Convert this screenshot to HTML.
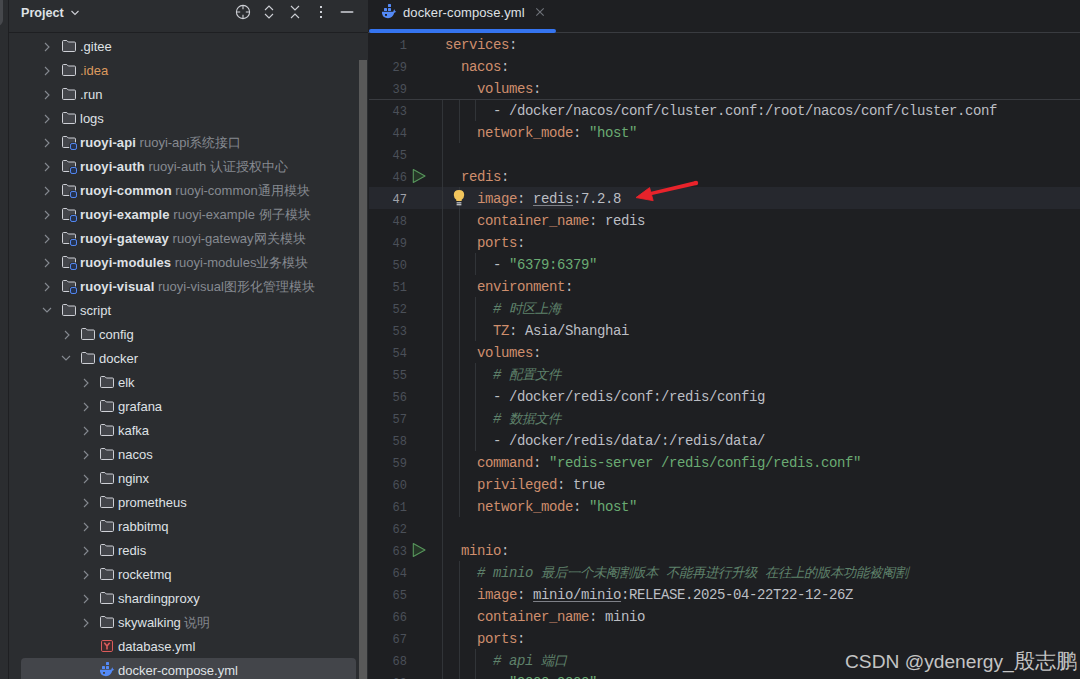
<!DOCTYPE html>
<html><head><meta charset="utf-8">
<style>
*{margin:0;padding:0;box-sizing:border-box}
html,body{width:1080px;height:679px;overflow:hidden;background:#1E1F22}
body{position:relative;font-family:"Liberation Sans",sans-serif;font-size:13px;color:#DFE1E5}
.abs{position:absolute}
#strip{left:0;top:0;width:8px;height:679px;background:#2B2D30;overflow:hidden}
#strip .btn{position:absolute;left:-10px;top:-5px;width:13px;height:31px;border-radius:6px;background:#46484C}
#vb1{left:8px;top:0;width:1px;height:679px;background:#1E1F22}
#proj{left:9px;top:0;width:359px;height:679px;background:#2B2D30}
#projhdr{left:9px;top:32px;width:359px;height:1px;background:#1E1F22}
.ptitle{left:21px;top:5px;font-weight:bold;font-size:12.6px;line-height:17px;color:#DFE1E5}
.trow{height:24px;line-height:24px;white-space:nowrap;color:#DFE1E5}
.gray{color:#868A91}
.b{font-weight:bold;letter-spacing:0.12px}
#editor{left:368px;top:0;width:712px;height:679px;background:#1E1F22}
#tabline{left:368px;top:32px;width:712px;height:1px;background:#393B40}
#tabul{left:369px;top:29px;width:187px;height:4px;border-radius:2px;background:#3574F0}
.code{position:absolute;left:445px;height:22px;line-height:22px;font-family:"Liberation Mono",monospace;font-size:14px;letter-spacing:-0.4px;white-space:pre;color:#BCBEC4}
.ln{position:absolute;left:371px;width:36px;text-align:right;transform:scaleX(0.9);transform-origin:35px 0;height:22px;line-height:22px;font-family:"Liberation Mono",monospace;font-size:13.333px;color:#4B5059}
.ln.cur{color:#A1A3AB}
.k{color:#CF8E6D}
.s{color:#6AAB73}
.c{color:#5F826B;font-style:italic}
.u{text-decoration:underline;text-underline-offset:2px;text-decoration-color:#7E8087}
.cj{font-size:13.333px;letter-spacing:0}
.ig{position:absolute;width:1px;background:#313438}
#sbar{left:359px;top:60px;width:8px;height:630px;background:#595959}
#vb2{left:368px;top:0;width:1px;height:679px;background:#1E1F22}
#sel{left:21px;top:658px;width:335px;height:30px;border-radius:4px;background:#43454A}
#caret{left:369px;top:187px;width:711px;height:22px;background:#26282E}
#stickyb{left:369px;top:99px;width:711px;height:1px;background:#393B40}
#wm{left:845px;top:648px;font-size:19.2px;color:#C4C4C4;line-height:26px;white-space:nowrap}
#wm .cj{font-size:20.5px}

</style></head><body>
<div class="abs" id="strip"><div class="btn"></div></div>
<div class="abs" id="proj"></div>
<div class="abs" id="vb1"></div>
<div class="abs" id="projhdr"></div>
<div class="abs ptitle">Project</div>
<svg class="abs" style="left:70px;top:9px" width="10" height="8" viewBox="0 0 10 8"><path d="M1.5 2 L5 5.5 L8.5 2" fill="none" stroke="#CED0D6" stroke-width="1.1"/></svg>
<svg class="abs" style="left:235px;top:4px" width="16" height="16" viewBox="0 0 16 16"><circle cx="8" cy="8" r="6.6" fill="none" stroke="#CED0D6" stroke-width="1.1"/><path d="M8 1.5 V5.2 M8 10.8 V14.5 M1.5 8 H5.2 M10.8 8 H14.5" stroke="#CED0D6" stroke-width="1.1"/></svg>
<svg class="abs" style="left:261px;top:4px" width="16" height="16" viewBox="0 0 16 16"><path d="M4 6 L8 2 L12 6 M4 10 L8 14 L12 10" fill="none" stroke="#CED0D6" stroke-width="1.1"/></svg>
<svg class="abs" style="left:287px;top:4px" width="16" height="16" viewBox="0 0 16 16"><path d="M4 2 L8 6 L12 2 M4 14 L8 10 L12 14" fill="none" stroke="#CED0D6" stroke-width="1.1"/></svg>
<svg class="abs" style="left:313px;top:4px" width="16" height="16" viewBox="0 0 16 16"><rect x="7" y="2" width="2" height="2" fill="#CED0D6"/><rect x="7" y="7" width="2" height="2" fill="#CED0D6"/><rect x="7" y="12" width="2" height="2" fill="#CED0D6"/></svg>
<svg class="abs" style="left:339px;top:4px" width="16" height="16" viewBox="0 0 16 16"><rect x="1.5" y="7" width="13" height="2" rx="1" fill="#A8AAB0"/></svg>
<div class="abs" id="sel"></div>
<div class="abs" id="sbar"></div>
<svg class="abs" style="left:43.2px;top:41.5px" width="8" height="10" viewBox="0 0 8 10"><path d="M2 1 L6 5 L2 9" fill="none" stroke="#868A91" stroke-width="1.1"/></svg>
<svg class="abs" style="left:61px;top:38px" width="16" height="16" viewBox="0 0 16 16"><path d="M1.5 3.6 Q1.5 2.5 2.6 2.5 H5.8 L7.3 4 H13.4 Q14.5 4 14.5 5.1 V12.4 Q14.5 13.5 13.4 13.5 H2.6 Q1.5 13.5 1.5 12.4 Z" fill="#43454A" stroke="#CED0D6" stroke-width="1"/></svg>
<div class="abs trow" style="left:80px;top:35px;"><span class="">.gitee</span></div>
<svg class="abs" style="left:43.2px;top:65.5px" width="8" height="10" viewBox="0 0 8 10"><path d="M2 1 L6 5 L2 9" fill="none" stroke="#868A91" stroke-width="1.1"/></svg>
<svg class="abs" style="left:61px;top:62px" width="16" height="16" viewBox="0 0 16 16"><path d="M1.5 3.6 Q1.5 2.5 2.6 2.5 H5.8 L7.3 4 H13.4 Q14.5 4 14.5 5.1 V12.4 Q14.5 13.5 13.4 13.5 H2.6 Q1.5 13.5 1.5 12.4 Z" fill="#43454A" stroke="#CED0D6" stroke-width="1"/></svg>
<div class="abs trow" style="left:80px;top:59px;color:#DC9A5E"><span class="">.idea</span></div>
<svg class="abs" style="left:43.2px;top:89.5px" width="8" height="10" viewBox="0 0 8 10"><path d="M2 1 L6 5 L2 9" fill="none" stroke="#868A91" stroke-width="1.1"/></svg>
<svg class="abs" style="left:61px;top:86px" width="16" height="16" viewBox="0 0 16 16"><path d="M1.5 3.6 Q1.5 2.5 2.6 2.5 H5.8 L7.3 4 H13.4 Q14.5 4 14.5 5.1 V12.4 Q14.5 13.5 13.4 13.5 H2.6 Q1.5 13.5 1.5 12.4 Z" fill="#43454A" stroke="#CED0D6" stroke-width="1"/></svg>
<div class="abs trow" style="left:80px;top:83px;"><span class="">.run</span></div>
<svg class="abs" style="left:43.2px;top:113.5px" width="8" height="10" viewBox="0 0 8 10"><path d="M2 1 L6 5 L2 9" fill="none" stroke="#868A91" stroke-width="1.1"/></svg>
<svg class="abs" style="left:61px;top:110px" width="16" height="16" viewBox="0 0 16 16"><path d="M1.5 3.6 Q1.5 2.5 2.6 2.5 H5.8 L7.3 4 H13.4 Q14.5 4 14.5 5.1 V12.4 Q14.5 13.5 13.4 13.5 H2.6 Q1.5 13.5 1.5 12.4 Z" fill="#43454A" stroke="#CED0D6" stroke-width="1"/></svg>
<div class="abs trow" style="left:80px;top:107px;"><span class="">logs</span></div>
<svg class="abs" style="left:43.2px;top:137.5px" width="8" height="10" viewBox="0 0 8 10"><path d="M2 1 L6 5 L2 9" fill="none" stroke="#868A91" stroke-width="1.1"/></svg>
<svg class="abs" style="left:61px;top:134px" width="16" height="16" viewBox="0 0 16 16"><path d="M1.5 3.6 Q1.5 2.5 2.6 2.5 H5.8 L7.3 4 H13.4 Q14.5 4 14.5 5.1 V12.4 Q14.5 13.5 13.4 13.5 H2.6 Q1.5 13.5 1.5 12.4 Z" fill="#43454A" stroke="#CED0D6" stroke-width="1"/><rect x="9.5" y="9.5" width="6" height="6" rx="1.6" fill="#2B2D30" stroke="#2B2D30" stroke-width="2.6"/><rect x="9.5" y="9.5" width="6" height="6" rx="1.6" fill="#25324D" stroke="#548AF7" stroke-width="1"/></svg>
<div class="abs trow" style="left:80px;top:131px;"><span class="b">ruoyi-api</span> <span class="gray">ruoyi-api系统接口</span></div>
<svg class="abs" style="left:43.2px;top:161.5px" width="8" height="10" viewBox="0 0 8 10"><path d="M2 1 L6 5 L2 9" fill="none" stroke="#868A91" stroke-width="1.1"/></svg>
<svg class="abs" style="left:61px;top:158px" width="16" height="16" viewBox="0 0 16 16"><path d="M1.5 3.6 Q1.5 2.5 2.6 2.5 H5.8 L7.3 4 H13.4 Q14.5 4 14.5 5.1 V12.4 Q14.5 13.5 13.4 13.5 H2.6 Q1.5 13.5 1.5 12.4 Z" fill="#43454A" stroke="#CED0D6" stroke-width="1"/><rect x="9.5" y="9.5" width="6" height="6" rx="1.6" fill="#2B2D30" stroke="#2B2D30" stroke-width="2.6"/><rect x="9.5" y="9.5" width="6" height="6" rx="1.6" fill="#25324D" stroke="#548AF7" stroke-width="1"/></svg>
<div class="abs trow" style="left:80px;top:155px;"><span class="b">ruoyi-auth</span> <span class="gray">ruoyi-auth 认证授权中心</span></div>
<svg class="abs" style="left:43.2px;top:185.5px" width="8" height="10" viewBox="0 0 8 10"><path d="M2 1 L6 5 L2 9" fill="none" stroke="#868A91" stroke-width="1.1"/></svg>
<svg class="abs" style="left:61px;top:182px" width="16" height="16" viewBox="0 0 16 16"><path d="M1.5 3.6 Q1.5 2.5 2.6 2.5 H5.8 L7.3 4 H13.4 Q14.5 4 14.5 5.1 V12.4 Q14.5 13.5 13.4 13.5 H2.6 Q1.5 13.5 1.5 12.4 Z" fill="#43454A" stroke="#CED0D6" stroke-width="1"/><rect x="9.5" y="9.5" width="6" height="6" rx="1.6" fill="#2B2D30" stroke="#2B2D30" stroke-width="2.6"/><rect x="9.5" y="9.5" width="6" height="6" rx="1.6" fill="#25324D" stroke="#548AF7" stroke-width="1"/></svg>
<div class="abs trow" style="left:80px;top:179px;"><span class="b">ruoyi-common</span> <span class="gray">ruoyi-common通用模块</span></div>
<svg class="abs" style="left:43.2px;top:209.5px" width="8" height="10" viewBox="0 0 8 10"><path d="M2 1 L6 5 L2 9" fill="none" stroke="#868A91" stroke-width="1.1"/></svg>
<svg class="abs" style="left:61px;top:206px" width="16" height="16" viewBox="0 0 16 16"><path d="M1.5 3.6 Q1.5 2.5 2.6 2.5 H5.8 L7.3 4 H13.4 Q14.5 4 14.5 5.1 V12.4 Q14.5 13.5 13.4 13.5 H2.6 Q1.5 13.5 1.5 12.4 Z" fill="#43454A" stroke="#CED0D6" stroke-width="1"/><rect x="9.5" y="9.5" width="6" height="6" rx="1.6" fill="#2B2D30" stroke="#2B2D30" stroke-width="2.6"/><rect x="9.5" y="9.5" width="6" height="6" rx="1.6" fill="#25324D" stroke="#548AF7" stroke-width="1"/></svg>
<div class="abs trow" style="left:80px;top:203px;"><span class="b">ruoyi-example</span> <span class="gray">ruoyi-example 例子模块</span></div>
<svg class="abs" style="left:43.2px;top:233.5px" width="8" height="10" viewBox="0 0 8 10"><path d="M2 1 L6 5 L2 9" fill="none" stroke="#868A91" stroke-width="1.1"/></svg>
<svg class="abs" style="left:61px;top:230px" width="16" height="16" viewBox="0 0 16 16"><path d="M1.5 3.6 Q1.5 2.5 2.6 2.5 H5.8 L7.3 4 H13.4 Q14.5 4 14.5 5.1 V12.4 Q14.5 13.5 13.4 13.5 H2.6 Q1.5 13.5 1.5 12.4 Z" fill="#43454A" stroke="#CED0D6" stroke-width="1"/><rect x="9.5" y="9.5" width="6" height="6" rx="1.6" fill="#2B2D30" stroke="#2B2D30" stroke-width="2.6"/><rect x="9.5" y="9.5" width="6" height="6" rx="1.6" fill="#25324D" stroke="#548AF7" stroke-width="1"/></svg>
<div class="abs trow" style="left:80px;top:227px;"><span class="b">ruoyi-gateway</span> <span class="gray">ruoyi-gateway网关模块</span></div>
<svg class="abs" style="left:43.2px;top:257.5px" width="8" height="10" viewBox="0 0 8 10"><path d="M2 1 L6 5 L2 9" fill="none" stroke="#868A91" stroke-width="1.1"/></svg>
<svg class="abs" style="left:61px;top:254px" width="16" height="16" viewBox="0 0 16 16"><path d="M1.5 3.6 Q1.5 2.5 2.6 2.5 H5.8 L7.3 4 H13.4 Q14.5 4 14.5 5.1 V12.4 Q14.5 13.5 13.4 13.5 H2.6 Q1.5 13.5 1.5 12.4 Z" fill="#43454A" stroke="#CED0D6" stroke-width="1"/><rect x="9.5" y="9.5" width="6" height="6" rx="1.6" fill="#2B2D30" stroke="#2B2D30" stroke-width="2.6"/><rect x="9.5" y="9.5" width="6" height="6" rx="1.6" fill="#25324D" stroke="#548AF7" stroke-width="1"/></svg>
<div class="abs trow" style="left:80px;top:251px;"><span class="b">ruoyi-modules</span> <span class="gray">ruoyi-modules业务模块</span></div>
<svg class="abs" style="left:43.2px;top:281.5px" width="8" height="10" viewBox="0 0 8 10"><path d="M2 1 L6 5 L2 9" fill="none" stroke="#868A91" stroke-width="1.1"/></svg>
<svg class="abs" style="left:61px;top:278px" width="16" height="16" viewBox="0 0 16 16"><path d="M1.5 3.6 Q1.5 2.5 2.6 2.5 H5.8 L7.3 4 H13.4 Q14.5 4 14.5 5.1 V12.4 Q14.5 13.5 13.4 13.5 H2.6 Q1.5 13.5 1.5 12.4 Z" fill="#43454A" stroke="#CED0D6" stroke-width="1"/><rect x="9.5" y="9.5" width="6" height="6" rx="1.6" fill="#2B2D30" stroke="#2B2D30" stroke-width="2.6"/><rect x="9.5" y="9.5" width="6" height="6" rx="1.6" fill="#25324D" stroke="#548AF7" stroke-width="1"/></svg>
<div class="abs trow" style="left:80px;top:275px;"><span class="b">ruoyi-visual</span> <span class="gray">ruoyi-visual图形化管理模块</span></div>
<svg class="abs" style="left:42px;top:306px" width="10" height="8" viewBox="0 0 10 8"><path d="M1 2 L5 6 L9 2" fill="none" stroke="#868A91" stroke-width="1.1"/></svg>
<svg class="abs" style="left:61px;top:302px" width="16" height="16" viewBox="0 0 16 16"><path d="M1.5 3.6 Q1.5 2.5 2.6 2.5 H5.8 L7.3 4 H13.4 Q14.5 4 14.5 5.1 V12.4 Q14.5 13.5 13.4 13.5 H2.6 Q1.5 13.5 1.5 12.4 Z" fill="#43454A" stroke="#CED0D6" stroke-width="1"/></svg>
<div class="abs trow" style="left:80px;top:299px;"><span class="">script</span></div>
<svg class="abs" style="left:62.6px;top:329.5px" width="8" height="10" viewBox="0 0 8 10"><path d="M2 1 L6 5 L2 9" fill="none" stroke="#868A91" stroke-width="1.1"/></svg>
<svg class="abs" style="left:80px;top:326px" width="16" height="16" viewBox="0 0 16 16"><path d="M1.5 3.6 Q1.5 2.5 2.6 2.5 H5.8 L7.3 4 H13.4 Q14.5 4 14.5 5.1 V12.4 Q14.5 13.5 13.4 13.5 H2.6 Q1.5 13.5 1.5 12.4 Z" fill="#43454A" stroke="#CED0D6" stroke-width="1"/></svg>
<div class="abs trow" style="left:99px;top:323px;"><span class="">config</span></div>
<svg class="abs" style="left:61px;top:354px" width="10" height="8" viewBox="0 0 10 8"><path d="M1 2 L5 6 L9 2" fill="none" stroke="#868A91" stroke-width="1.1"/></svg>
<svg class="abs" style="left:80px;top:350px" width="16" height="16" viewBox="0 0 16 16"><path d="M1.5 3.6 Q1.5 2.5 2.6 2.5 H5.8 L7.3 4 H13.4 Q14.5 4 14.5 5.1 V12.4 Q14.5 13.5 13.4 13.5 H2.6 Q1.5 13.5 1.5 12.4 Z" fill="#43454A" stroke="#CED0D6" stroke-width="1"/></svg>
<div class="abs trow" style="left:99px;top:347px;"><span class="">docker</span></div>
<svg class="abs" style="left:82.0px;top:377.5px" width="8" height="10" viewBox="0 0 8 10"><path d="M2 1 L6 5 L2 9" fill="none" stroke="#868A91" stroke-width="1.1"/></svg>
<svg class="abs" style="left:99px;top:374px" width="16" height="16" viewBox="0 0 16 16"><path d="M1.5 3.6 Q1.5 2.5 2.6 2.5 H5.8 L7.3 4 H13.4 Q14.5 4 14.5 5.1 V12.4 Q14.5 13.5 13.4 13.5 H2.6 Q1.5 13.5 1.5 12.4 Z" fill="#43454A" stroke="#CED0D6" stroke-width="1"/></svg>
<div class="abs trow" style="left:118px;top:371px;"><span class="">elk</span></div>
<svg class="abs" style="left:82.0px;top:401.5px" width="8" height="10" viewBox="0 0 8 10"><path d="M2 1 L6 5 L2 9" fill="none" stroke="#868A91" stroke-width="1.1"/></svg>
<svg class="abs" style="left:99px;top:398px" width="16" height="16" viewBox="0 0 16 16"><path d="M1.5 3.6 Q1.5 2.5 2.6 2.5 H5.8 L7.3 4 H13.4 Q14.5 4 14.5 5.1 V12.4 Q14.5 13.5 13.4 13.5 H2.6 Q1.5 13.5 1.5 12.4 Z" fill="#43454A" stroke="#CED0D6" stroke-width="1"/></svg>
<div class="abs trow" style="left:118px;top:395px;"><span class="">grafana</span></div>
<svg class="abs" style="left:82.0px;top:425.5px" width="8" height="10" viewBox="0 0 8 10"><path d="M2 1 L6 5 L2 9" fill="none" stroke="#868A91" stroke-width="1.1"/></svg>
<svg class="abs" style="left:99px;top:422px" width="16" height="16" viewBox="0 0 16 16"><path d="M1.5 3.6 Q1.5 2.5 2.6 2.5 H5.8 L7.3 4 H13.4 Q14.5 4 14.5 5.1 V12.4 Q14.5 13.5 13.4 13.5 H2.6 Q1.5 13.5 1.5 12.4 Z" fill="#43454A" stroke="#CED0D6" stroke-width="1"/></svg>
<div class="abs trow" style="left:118px;top:419px;"><span class="">kafka</span></div>
<svg class="abs" style="left:82.0px;top:449.5px" width="8" height="10" viewBox="0 0 8 10"><path d="M2 1 L6 5 L2 9" fill="none" stroke="#868A91" stroke-width="1.1"/></svg>
<svg class="abs" style="left:99px;top:446px" width="16" height="16" viewBox="0 0 16 16"><path d="M1.5 3.6 Q1.5 2.5 2.6 2.5 H5.8 L7.3 4 H13.4 Q14.5 4 14.5 5.1 V12.4 Q14.5 13.5 13.4 13.5 H2.6 Q1.5 13.5 1.5 12.4 Z" fill="#43454A" stroke="#CED0D6" stroke-width="1"/></svg>
<div class="abs trow" style="left:118px;top:443px;"><span class="">nacos</span></div>
<svg class="abs" style="left:82.0px;top:473.5px" width="8" height="10" viewBox="0 0 8 10"><path d="M2 1 L6 5 L2 9" fill="none" stroke="#868A91" stroke-width="1.1"/></svg>
<svg class="abs" style="left:99px;top:470px" width="16" height="16" viewBox="0 0 16 16"><path d="M1.5 3.6 Q1.5 2.5 2.6 2.5 H5.8 L7.3 4 H13.4 Q14.5 4 14.5 5.1 V12.4 Q14.5 13.5 13.4 13.5 H2.6 Q1.5 13.5 1.5 12.4 Z" fill="#43454A" stroke="#CED0D6" stroke-width="1"/></svg>
<div class="abs trow" style="left:118px;top:467px;"><span class="">nginx</span></div>
<svg class="abs" style="left:82.0px;top:497.5px" width="8" height="10" viewBox="0 0 8 10"><path d="M2 1 L6 5 L2 9" fill="none" stroke="#868A91" stroke-width="1.1"/></svg>
<svg class="abs" style="left:99px;top:494px" width="16" height="16" viewBox="0 0 16 16"><path d="M1.5 3.6 Q1.5 2.5 2.6 2.5 H5.8 L7.3 4 H13.4 Q14.5 4 14.5 5.1 V12.4 Q14.5 13.5 13.4 13.5 H2.6 Q1.5 13.5 1.5 12.4 Z" fill="#43454A" stroke="#CED0D6" stroke-width="1"/></svg>
<div class="abs trow" style="left:118px;top:491px;"><span class="">prometheus</span></div>
<svg class="abs" style="left:82.0px;top:521.5px" width="8" height="10" viewBox="0 0 8 10"><path d="M2 1 L6 5 L2 9" fill="none" stroke="#868A91" stroke-width="1.1"/></svg>
<svg class="abs" style="left:99px;top:518px" width="16" height="16" viewBox="0 0 16 16"><path d="M1.5 3.6 Q1.5 2.5 2.6 2.5 H5.8 L7.3 4 H13.4 Q14.5 4 14.5 5.1 V12.4 Q14.5 13.5 13.4 13.5 H2.6 Q1.5 13.5 1.5 12.4 Z" fill="#43454A" stroke="#CED0D6" stroke-width="1"/></svg>
<div class="abs trow" style="left:118px;top:515px;"><span class="">rabbitmq</span></div>
<svg class="abs" style="left:82.0px;top:545.5px" width="8" height="10" viewBox="0 0 8 10"><path d="M2 1 L6 5 L2 9" fill="none" stroke="#868A91" stroke-width="1.1"/></svg>
<svg class="abs" style="left:99px;top:542px" width="16" height="16" viewBox="0 0 16 16"><path d="M1.5 3.6 Q1.5 2.5 2.6 2.5 H5.8 L7.3 4 H13.4 Q14.5 4 14.5 5.1 V12.4 Q14.5 13.5 13.4 13.5 H2.6 Q1.5 13.5 1.5 12.4 Z" fill="#43454A" stroke="#CED0D6" stroke-width="1"/></svg>
<div class="abs trow" style="left:118px;top:539px;"><span class="">redis</span></div>
<svg class="abs" style="left:82.0px;top:569.5px" width="8" height="10" viewBox="0 0 8 10"><path d="M2 1 L6 5 L2 9" fill="none" stroke="#868A91" stroke-width="1.1"/></svg>
<svg class="abs" style="left:99px;top:566px" width="16" height="16" viewBox="0 0 16 16"><path d="M1.5 3.6 Q1.5 2.5 2.6 2.5 H5.8 L7.3 4 H13.4 Q14.5 4 14.5 5.1 V12.4 Q14.5 13.5 13.4 13.5 H2.6 Q1.5 13.5 1.5 12.4 Z" fill="#43454A" stroke="#CED0D6" stroke-width="1"/></svg>
<div class="abs trow" style="left:118px;top:563px;"><span class="">rocketmq</span></div>
<svg class="abs" style="left:82.0px;top:593.5px" width="8" height="10" viewBox="0 0 8 10"><path d="M2 1 L6 5 L2 9" fill="none" stroke="#868A91" stroke-width="1.1"/></svg>
<svg class="abs" style="left:99px;top:590px" width="16" height="16" viewBox="0 0 16 16"><path d="M1.5 3.6 Q1.5 2.5 2.6 2.5 H5.8 L7.3 4 H13.4 Q14.5 4 14.5 5.1 V12.4 Q14.5 13.5 13.4 13.5 H2.6 Q1.5 13.5 1.5 12.4 Z" fill="#43454A" stroke="#CED0D6" stroke-width="1"/></svg>
<div class="abs trow" style="left:118px;top:587px;"><span class="">shardingproxy</span></div>
<svg class="abs" style="left:82.0px;top:617.5px" width="8" height="10" viewBox="0 0 8 10"><path d="M2 1 L6 5 L2 9" fill="none" stroke="#868A91" stroke-width="1.1"/></svg>
<svg class="abs" style="left:99px;top:614px" width="16" height="16" viewBox="0 0 16 16"><path d="M1.5 3.6 Q1.5 2.5 2.6 2.5 H5.8 L7.3 4 H13.4 Q14.5 4 14.5 5.1 V12.4 Q14.5 13.5 13.4 13.5 H2.6 Q1.5 13.5 1.5 12.4 Z" fill="#43454A" stroke="#CED0D6" stroke-width="1"/></svg>
<div class="abs trow" style="left:118px;top:611px;"><span class="">skywalking</span> <span class="gray">说明</span></div>
<svg class="abs" style="left:99px;top:638px" width="16" height="16" viewBox="0 0 16 16"><rect x="2.5" y="2.5" width="11" height="11" rx="1.3" fill="#3D2A2C" stroke="#DB5C5C" stroke-width="1"/><path d="M5.3 4.8 L8 8 L10.7 4.8 M8 7.8 V11.4" fill="none" stroke="#DB5C5C" stroke-width="1.6"/></svg>
<div class="abs trow" style="left:118px;top:635px;"><span class="">database.yml</span></div>
<svg class="abs" style="left:99px;top:661px" width="16" height="16" viewBox="0 0 16 16"><g fill="#548AF7"><rect x="7" y="1" width="3" height="3" rx="0.6"/><rect x="3" y="5" width="3" height="3" rx="0.6"/><rect x="7" y="5" width="3" height="3" rx="0.6"/><path d="M1 8.8 H12.2 Q12.6 7.2 13.2 6.2 Q14 7.2 14 8.2 Q14.8 8.1 15.3 8.6 Q14.6 9.6 13.3 9.7 Q11.8 15 7 15.2 Q2 15.2 1 10.6 Z"/></g><rect x="4" y="11" width="2" height="1.8" fill="#43454A"/></svg>
<div class="abs trow" style="left:118px;top:659px;"><span class="">docker-compose.yml</span></div>
<div class="abs" id="editor"></div>
<div class="abs" id="vb2"></div>
<div class="abs" id="tabline"></div>
<div class="abs" id="tabul"></div>
<div class="abs" style="left:403px;top:4px;line-height:17px;color:#DFE1E5;letter-spacing:0.1px">docker-compose.yml</div>
<svg class="abs" style="left:532px;top:4px" width="16" height="16" viewBox="0 0 16 16"><path d="M4.3 4.3 L11.7 11.7 M11.7 4.3 L4.3 11.7" stroke="#6F737A" stroke-width="1.1"/></svg>
<div class="abs" id="caret"></div>
<div class="ig" style="left:442px;top:100px;height:579px"></div>
<div class="ig" style="left:459px;top:100px;height:43px"></div>
<div class="ig" style="left:475px;top:100px;height:21px"></div>
<div class="ig" style="left:459px;top:187px;height:330px"></div>
<div class="ig" style="left:475px;top:253px;height:22px"></div>
<div class="ig" style="left:475px;top:297px;height:44px"></div>
<div class="ig" style="left:475px;top:363px;height:88px"></div>
<div class="ig" style="left:459px;top:561px;height:118px"></div>
<div class="ig" style="left:475px;top:649px;height:30px"></div>
<svg class="abs" style="left:381px;top:3px" width="16" height="16" viewBox="0 0 16 16"><g fill="#548AF7"><rect x="7" y="1" width="3" height="3" rx="0.6"/><rect x="3" y="5" width="3" height="3" rx="0.6"/><rect x="7" y="5" width="3" height="3" rx="0.6"/><path d="M1 8.8 H12.2 Q12.6 7.2 13.2 6.2 Q14 7.2 14 8.2 Q14.8 8.1 15.3 8.6 Q14.6 9.6 13.3 9.7 Q11.8 15 7 15.2 Q2 15.2 1 10.6 Z"/></g><rect x="4" y="11" width="2" height="1.8" fill="#1E1F22"/></svg>
<svg class="abs" style="left:410px;top:168px" width="16" height="16" viewBox="0 0 16 16"><path d="M3.3 1.6 L15 8 L3.3 14.4 Z" fill="#253627" stroke="#57965C" stroke-width="1.1" stroke-linejoin="round"/></svg>
<svg class="abs" style="left:410px;top:542px" width="16" height="16" viewBox="0 0 16 16"><path d="M3.3 1.6 L15 8 L3.3 14.4 Z" fill="#253627" stroke="#57965C" stroke-width="1.1" stroke-linejoin="round"/></svg>
<svg class="abs" style="left:451px;top:189px" width="16" height="18" viewBox="0 0 16 18"><path d="M8 1 Q13.2 1 13.2 6 Q13.2 8.8 10.7 10.8 V12 H5.3 V10.8 Q2.8 8.8 2.8 6 Q2.8 1 8 1 Z" fill="#F2C55C"/><rect x="5.6" y="13.3" width="4.8" height="1.1" fill="#DFE1E5"/><rect x="5.6" y="15.2" width="4.8" height="1.1" fill="#DFE1E5"/></svg>
<svg class="abs" style="left:630px;top:176px" width="75" height="30" viewBox="630 176 75 30"><g fill="#E8232B"><path d="M646.5 196.3 L696.5 185.1 L695.5 180.9 L646 193.1 Z"/><circle cx="696" cy="183" r="2.2"/><path d="M636 197.6 L649.6 187.6 L653.2 200.7 Z" stroke="#E8232B" stroke-width="0.8" stroke-linejoin="round"/></g></svg>
<div class="ln" style="top:35px">1</div><div class="code" style="top:34px"><span class="k">services</span>:</div>
<div class="ln" style="top:57px">29</div><div class="code" style="top:56px">  <span class="k">nacos</span>:</div>
<div class="ln" style="top:79px">39</div><div class="code" style="top:78px">    <span class="k">volumes</span>:</div>
<div class="ln" style="top:101px">43</div><div class="code" style="top:100px">      - /docker/nacos/conf/cluster.conf:/root/nacos/conf/cluster.conf</div>
<div class="ln" style="top:123px">44</div><div class="code" style="top:122px">    <span class="k">network_mode</span>: <span class="s">&quot;host&quot;</span></div>
<div class="ln" style="top:145px">45</div><div class="code" style="top:144px"></div>
<div class="ln" style="top:167px">46</div><div class="code" style="top:166px">  <span class="k">redis</span>:</div>
<div class="ln cur" style="top:189px">47</div><div class="code" style="top:188px">    <span class="k">image</span>: <span class="u">redis</span>:7.2.8</div>
<div class="ln" style="top:211px">48</div><div class="code" style="top:210px">    <span class="k">container_name</span>: redis</div>
<div class="ln" style="top:233px">49</div><div class="code" style="top:232px">    <span class="k">ports</span>:</div>
<div class="ln" style="top:255px">50</div><div class="code" style="top:254px">      - <span class="s">&quot;6379:6379&quot;</span></div>
<div class="ln" style="top:277px">51</div><div class="code" style="top:276px">    <span class="k">environment</span>:</div>
<div class="ln" style="top:299px">52</div><div class="code" style="top:298px">      <span class="c"># <span class="cj">时区上海</span></span></div>
<div class="ln" style="top:321px">53</div><div class="code" style="top:320px">      <span class="k">TZ</span>: Asia/Shanghai</div>
<div class="ln" style="top:343px">54</div><div class="code" style="top:342px">    <span class="k">volumes</span>:</div>
<div class="ln" style="top:365px">55</div><div class="code" style="top:364px">      <span class="c"># <span class="cj">配置文件</span></span></div>
<div class="ln" style="top:387px">56</div><div class="code" style="top:386px">      - /docker/redis/conf:/redis/config</div>
<div class="ln" style="top:409px">57</div><div class="code" style="top:408px">      <span class="c"># <span class="cj">数据文件</span></span></div>
<div class="ln" style="top:431px">58</div><div class="code" style="top:430px">      - /docker/redis/data/:/redis/data/</div>
<div class="ln" style="top:453px">59</div><div class="code" style="top:452px">    <span class="k">command</span>: <span class="s">&quot;redis-server /redis/config/redis.conf&quot;</span></div>
<div class="ln" style="top:475px">60</div><div class="code" style="top:474px">    <span class="k">privileged</span>: true</div>
<div class="ln" style="top:497px">61</div><div class="code" style="top:496px">    <span class="k">network_mode</span>: <span class="s">&quot;host&quot;</span></div>
<div class="ln" style="top:519px">62</div><div class="code" style="top:518px"></div>
<div class="ln" style="top:541px">63</div><div class="code" style="top:540px">  <span class="k">minio</span>:</div>
<div class="ln" style="top:563px">64</div><div class="code" style="top:562px">    <span class="c"># minio <span class="cj">最后一个未阉割版本</span> <span class="cj">不能再进行升级</span> <span class="cj">在往上的版本功能被阉割</span></span></div>
<div class="ln" style="top:585px">65</div><div class="code" style="top:584px">    <span class="k">image</span>: <span class="u">minio/minio</span>:RELEASE.2025-04-22T22-12-26Z</div>
<div class="ln" style="top:607px">66</div><div class="code" style="top:606px">    <span class="k">container_name</span>: minio</div>
<div class="ln" style="top:629px">67</div><div class="code" style="top:628px">    <span class="k">ports</span>:</div>
<div class="ln" style="top:651px">68</div><div class="code" style="top:650px">      <span class="c"># api <span class="cj">端口</span></span></div>
<div class="ln" style="top:673px">69</div><div class="code" style="top:672px">      - <span class="s">&quot;9000:9000&quot;</span></div>
<div class="abs" id="stickyb"></div>
<div class="abs" id="wm">CSDN @ydenergy_<span class="cj">殷志鹏</span></div>
</body></html>
